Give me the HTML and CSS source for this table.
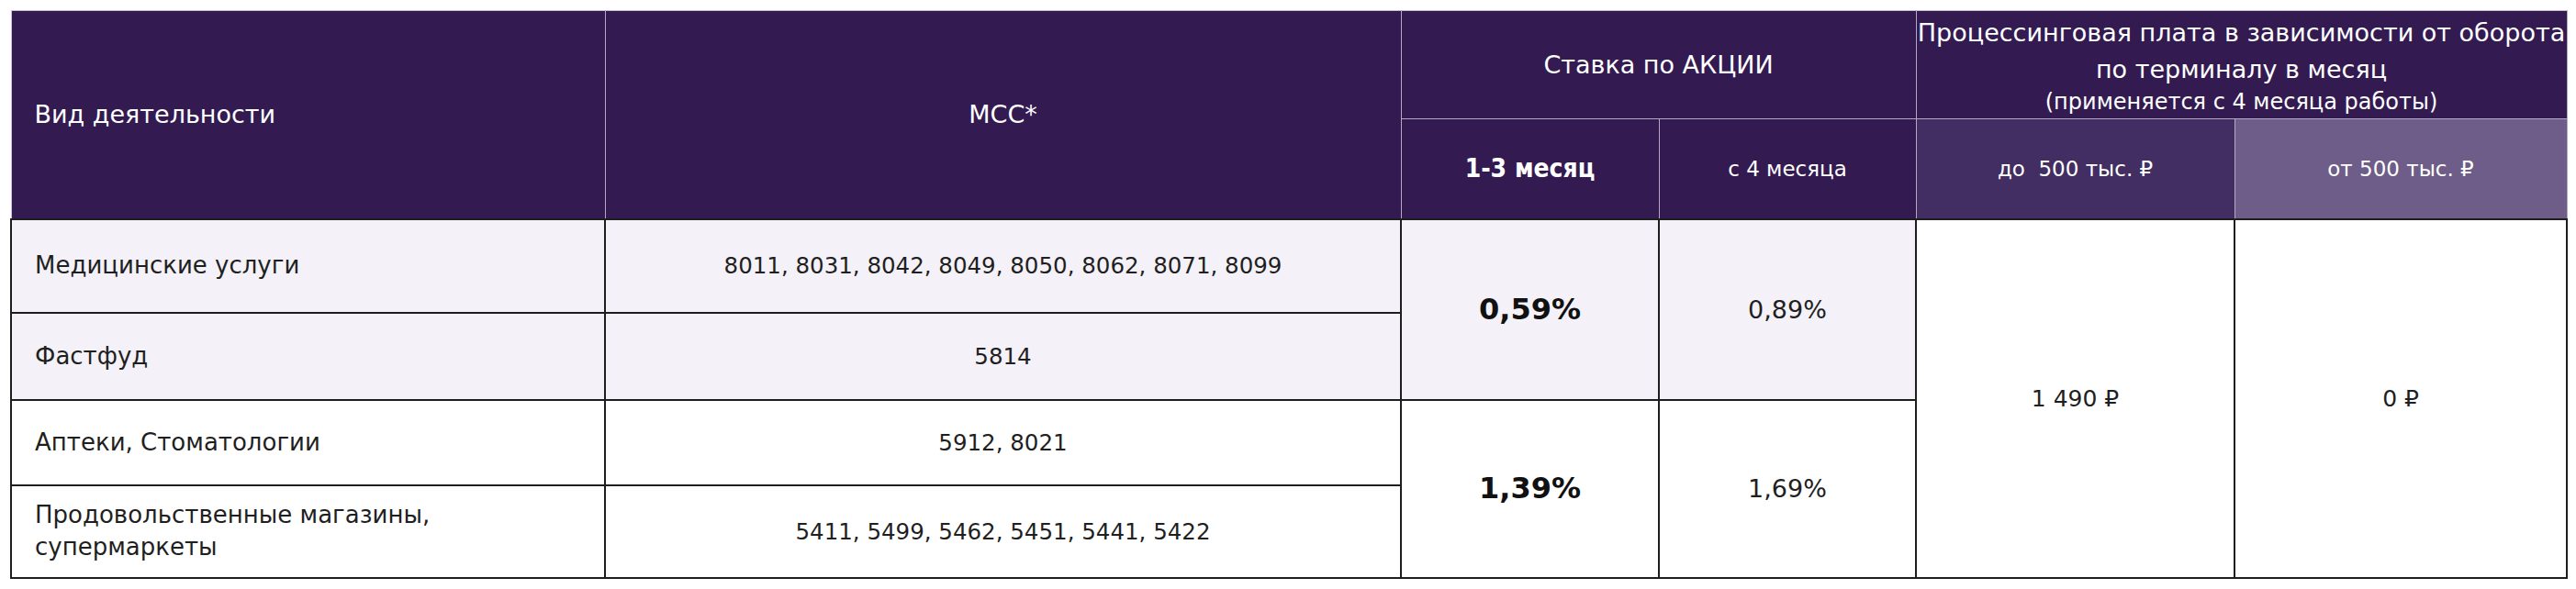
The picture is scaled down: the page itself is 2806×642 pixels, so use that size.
FILE: index.html
```html
<!DOCTYPE html>
<html lang="ru">
<head>
<meta charset="utf-8">
<title>Тарифы</title>
<link rel="stylesheet" href="styles.css">
</head>
<body>
<table class="tariffs">
  <colgroup>
    <col class="c-kind">
    <col class="c-mcc">
    <col class="c-rate1">
    <col class="c-rate2">
    <col class="c-fee1">
    <col class="c-fee2">
  </colgroup>
  <thead>
    <tr class="h1">
      <th class="th-left" rowspan="2">Вид деятельности</th>
      <th rowspan="2">MCC*</th>
      <th colspan="2">Ставка по АКЦИИ</th>
      <th colspan="2" class="th-proc">Процессинговая плата в зависимости от оборота<br>по терминалу в месяц<span class="small">(применяется с 4 месяца работы)</span></th>
    </tr>
    <tr class="h2">
      <th class="th-bold">1-3 месяц</th>
      <th class="th-sub">с 4 месяца</th>
      <th class="th-mid">до&nbsp; 500 тыс. ₽</th>
      <th class="th-light">от 500 тыс. ₽</th>
    </tr>
  </thead>
  <tbody>
    <tr class="r1 alt">
      <td class="td-left">Медицинские услуги</td>
      <td class="mcc">8011, 8031, 8042, 8049, 8050, 8062, 8071, 8099</td>
      <td rowspan="2" class="bold">0,59%</td>
      <td rowspan="2" class="rate">0,89%</td>
      <td rowspan="4" class="white fee">1 490 ₽</td>
      <td rowspan="4" class="white fee">0 ₽</td>
    </tr>
    <tr class="r2 alt">
      <td class="td-left">Фастфуд</td>
      <td class="mcc">5814</td>
    </tr>
    <tr class="r3">
      <td class="td-left">Аптеки, Стоматологии</td>
      <td class="mcc">5912, 8021</td>
      <td rowspan="2" class="bold">1,39%</td>
      <td rowspan="2" class="rate">1,69%</td>
    </tr>
    <tr class="r4">
      <td class="td-left">Продовольственные магазины,<br>супермаркеты</td>
      <td class="mcc">5411, 5499, 5462, 5451, 5441, 5422</td>
    </tr>
  </tbody>
</table>
</body>
</html>
```
FILE: styles.css
```css
html, body {
  margin: 0;
  padding: 0;
  background: #ffffff;
}

body {
  padding: 11px 0 0 11px;
}

.tariffs {
  border-collapse: collapse;
  table-layout: fixed;
  width: 2784px;
  font-family: "DejaVu Sans", "Liberation Sans", sans-serif;
  font-size: 26px;
  color: #1f1f1f;
}

.c-kind { width: 647px; }
.c-mcc { width: 867px; }
.c-rate1 { width: 281px; }
.c-rate2 { width: 280px; }
.c-fee1 { width: 347px; }
.c-fee2 { width: 362px; }

.tariffs th {
  background: #331b52;
  color: #ffffff;
  font-weight: normal;
  font-size: 27px;
  text-align: center;
  vertical-align: middle;
  border: 1px solid #b4aac4;
  padding: 0 4px;
  line-height: 34px;
}

.tariffs thead tr.h1 th {
  border-top: 1px solid #c9c2d6;
}

.tariffs thead th:first-child {
  border-left: 1px solid #c9c2d6;
}

.tariffs .h1 { height: 118px; }
.tariffs .h2 { height: 109px; }

.tariffs .th-left {
  text-align: left;
  padding-left: 25px;
}

.tariffs .th-proc {
  line-height: 40px;
  padding: 0;
  white-space: nowrap;
}

.tariffs .th-proc .small {
  display: block;
  font-size: 24px;
  line-height: 30px;
}

.tariffs .th-bold {
  font-weight: bold;
  font-stretch: condensed;
  font-size: 28px;
}

.tariffs .th-sub {
  font-size: 23px;
}

.tariffs .th-mid {
  background: #432e63;
  font-size: 23px;
}

.tariffs .th-light {
  background: #6e5d88;
  font-size: 23px;
}

.tariffs td {
  border: 2px solid #1e1e1e;
  text-align: center;
  vertical-align: middle;
  padding: 0 4px;
  line-height: 35px;
  background: #ffffff;
}

.tariffs tr.alt td {
  background: #f4f2f8;
}

.tariffs tr.alt td.white {
  background: #ffffff;
}

.tariffs .td-left {
  text-align: left;
  padding-left: 25px;
}

.tariffs .mcc {
  font-size: 24.5px;
}

.tariffs .rate {
  font-size: 27px;
}

.tariffs .fee {
  font-size: 25px;
}

.tariffs .bold {
  font-weight: bold;
  font-size: 32px;
  color: #111111;
}

.tariffs .r1 { height: 102px; }
.tariffs .r2 { height: 95px; }
.tariffs .r3 { height: 93px; }
.tariffs .r4 { height: 101px; }
```
